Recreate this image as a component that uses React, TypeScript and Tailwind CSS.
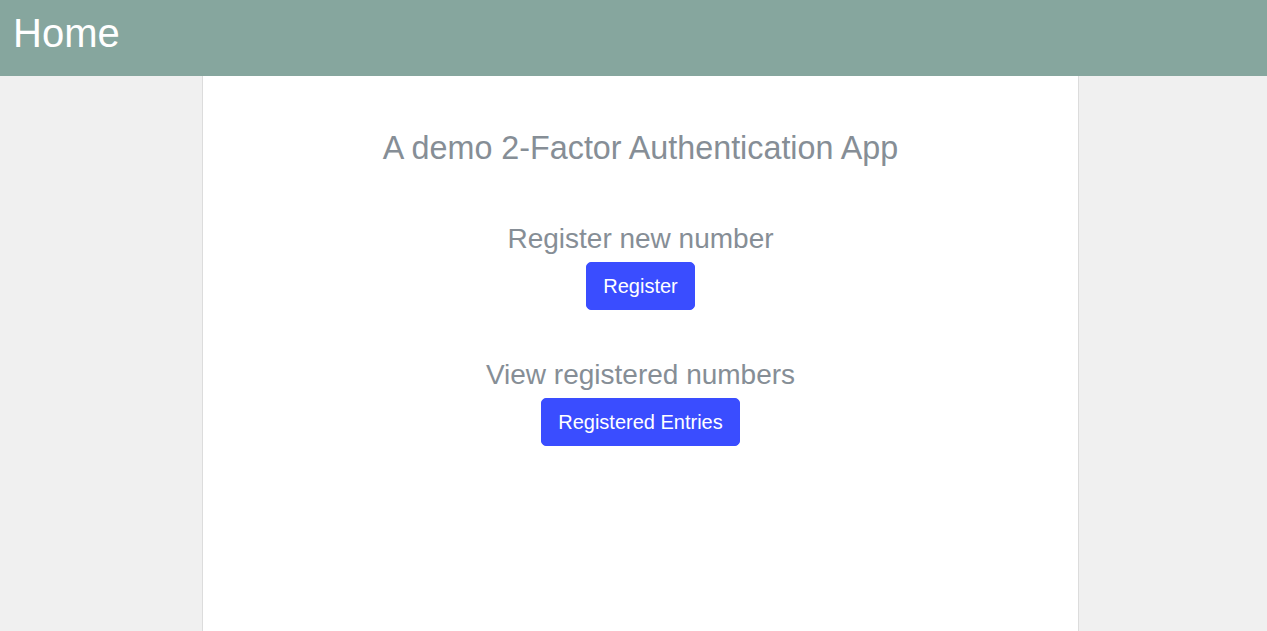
export default function App() {
  return (
    <div className="h-[631px] bg-[#f0f0f0] font-['Liberation_Sans',Arial,sans-serif] overflow-hidden">
      <header className="h-[76px] bg-[#86a69e] px-[13px] flex items-start">
        <h1 className="text-[40px] leading-[66px] text-white">Home</h1>
      </header>
      <main className="ml-[202px] w-[877px] h-[555px] bg-white border border-t-0 border-b-0 border-[#dcdcdc] flex flex-col items-center text-[#868e96]">
        <h2 className="mt-[49px] text-[32.3px] leading-[46px]">A demo 2-Factor Authentication App</h2>
        <section className="mt-[52px] flex flex-col items-center">
          <h3 className="text-[28px] leading-[32px]">Register new number</h3>
          <button className="mt-[7px] px-4 py-2 border border-[#3a4dff] bg-[#3a4dff] text-white text-[20px] leading-[30px] rounded-[5px]">
            Register
          </button>
        </section>
        <section className="mt-[49px] flex flex-col items-center">
          <h3 className="text-[28px] leading-[32px]">View registered numbers</h3>
          <button className="mt-[7px] px-4 py-2 border border-[#3a4dff] bg-[#3a4dff] text-white text-[20px] leading-[30px] rounded-[5px]">
            Registered Entries
          </button>
        </section>
      </main>
    </div>
  );
}
